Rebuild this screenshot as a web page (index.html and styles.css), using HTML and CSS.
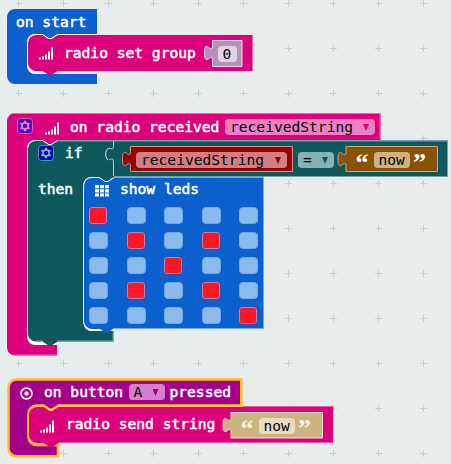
FILE: index.html
```html
<!DOCTYPE html>
<html lang="en">
<head>
<meta charset="utf-8">
<title>Blocks workspace</title>
<link rel="stylesheet" href="styles.css">
</head>
<body>
<svg class="defs" width="0" height="0" aria-hidden="true">
  <defs>
    <symbol id="signal" viewBox="0 0 14 13"><path fill="#fff" d="M0 10.500h2v2H0zM3 9.500h2v3H3zM6 7.500h2v5H6zM9 4.500h2v8H9zM12 .5h2v12h-2z"/></symbol>
    <symbol id="gear" viewBox="0 0 16 16">
      <rect x=".5" y=".5" width="15" height="15" rx="3" fill="var(--gear-bg)" stroke="var(--gear-fg)" stroke-opacity=".7"/>
      <g fill="none" stroke="var(--gear-fg)"><circle cx="8" cy="8" r="3.1" stroke-width="1.7"/><path stroke-width="2.1" d="M8 2.7v1.7M8 11.6v1.7M3.4 5.35l1.5.85M11.1 9.8l1.5.85M3.4 10.65l1.5-.85M11.1 6.2l1.5-.85"/></g>
    </symbol>
  </defs>
</svg>
<main class="workspace">
  <svg class="grid" width="451" height="464" aria-hidden="true">
    <defs><pattern id="plus" x="-4" y="-19" width="45" height="45" patternUnits="userSpaceOnUse"><path d="M19 22.5h7M22.5 19v7" stroke="#c9cece" fill="none"/></pattern></defs>
    <rect width="451" height="464" fill="url(#plus)"/>
  </svg>

  <section class="script start">
    <svg class="shape" viewBox="7 9 246 75">
      <path fill="#fff" d="M27 41a8 8 0 0 1 8-8h14v42H35a8 8 0 0 1-8-8z"/>
      <path fill="#0b60ce" d="M15 9H97V34H57.5l-6 4h-3l-6-4H35a8 8 0 0 0-8 8V66a8 8 0 0 0 8 8H97V84H15a8 8 0 0 1-8-8V17a8 8 0 0 1 8-8z"/>
      <path fill="#dc007b" d="M28 43a8 8 0 0 1 8-8h6.500l6 4h3l6-4H253V71H57.500l-6 4h-3l-6-4H36a8 8 0 0 1-8-8z"/>
      <path class="edge" d="M27.500 65V42.500a8 8 0 0 1 8-8h7l6 4h3l6-4H97"/>
      <path d="M252.500 35.500V71" stroke="#ed70b4" fill="none"/>
      <path class="value lilac" d="M212.500 40.500H242V66.500H212.500V60.500c0-10-8 8-8-7.500s8 2.500 8-7.500z"/>
    </svg>
    <div class="row r-start"><span>on start</span></div>
    <div class="row r-group"><svg class="signal"><use href="#signal"/></svg><span>radio set group</span><span class="field number">0</span></div>
  </section>

  <section class="script radio">
    <svg class="shape" viewBox="7 113 441 243">
      <path fill="#fff" d="M27 148a8 8 0 0 1 8-8h14v205H35a8 8 0 0 1-8-8z"/>
      <path fill="#dc007b" d="M15 113H380.500V140H57.500l-6 4h-3l-6-4H35a8 8 0 0 0-8 8V337a8 8 0 0 0 8 8H57V355.500H15a8 8 0 0 1-8-8V121a8 8 0 0 1 8-8z"/>
      <path d="M8 118a7 7 0 0 1 7-4.500H380V139M12 355H57" stroke="#ec62ae" fill="none"/>
      <path fill="#fff" d="M83 185a8 8 0 0 1 8-8h15v154H91a8 8 0 0 1-8-8z"/>
      <path fill="#0c585d" d="M36 140.500h6.500l6 4h3l6-4H448V177H114l-6 4h-3l-6-4H91.500a8 8 0 0 0-8 8V323a8 8 0 0 0 8 8H113.500V341.500H57.500l-6 4h-3l-6-4H36a8 8 0 0 1-8-8V148.500a8 8 0 0 1 8-8z"/>
      <path d="M57.500 141H447.500V176.500H114M36 341H43M57 341H113V331" stroke="#77a1a4" fill="none"/>
      <path class="edge" d="M27.500 337V148.500a8 8 0 0 1 8-8h7l6 4h3l6-4"/>
      <path d="M113.500 141V145.500c0 6-3 2-5.500 3M109 160c2-1 4.500-3 4.500 3V176" stroke="#b8d0d0" fill="none"/>
      <path d="M108 148.500c-3 1.500-3 10 0 11.500" stroke="#dbe8e8" fill="none"/>
      <path fill="#0b60ce" d="M92 177.500h7l6 4h3l6-4H263.500V329H113l-5 3.500h-3l-5-3.500H92a8 8 0 0 1-8-8V185.500a8 8 0 0 1 8-8z"/>
      <path d="M114 177.500H263.500V328.500H113" stroke="#70a9e5" fill="none"/>
      <path class="edge" d="M83.500 324V185.500a8 8 0 0 1 8-8h7.500l6 4h3l6-4"/>
      <path class="value red" d="M130.500 146.500H292.500V171.500H130.500V166.500c0-10-8 8-8-7.500s8 2.500 8-7.500z"/>
      <path class="value brown" d="M346 146.500H437.500V171.500H346V166.500c0-10-8 8-8-7.500s8 2.500 8-7.500z"/>
    </svg>
    <div class="row r-received"><svg class="gear"><use href="#gear"/></svg><svg class="signal"><use href="#signal"/></svg><span>on radio received</span><span class="field pink">receivedString<i class="arrow"></i></span></div>
    <div class="row r-if"><svg class="gear teal"><use href="#gear"/></svg><span>if</span><span class="field rose">receivedString<i class="arrow"></i></span><span class="field op">=<i class="arrow"></i></span><b class="quote">“</b><span class="field string">now</span><b class="quote">”</b></div>
    <div class="row r-then"><span>then</span><svg class="matrix" viewBox="0 0 14 12"><path fill="#fff" d="M0 0h4v3.200H0zM5 0h4v3.200H5zM10 0h4v3.200h-4zM0 4.200h4v3.200H0zM5 4.200h4v3.200H5zM10 4.200h4v3.200h-4zM0 8.400h4v3.200H0zM5 8.400h4v3.200H5zM10 8.400h4v3.200h-4z"/></svg><span>show leds</span></div>
    <div class="leds">
      <i class="on"></i><i></i><i></i><i></i><i></i>
      <i></i><i class="on"></i><i></i><i class="on"></i><i></i>
      <i></i><i></i><i class="on"></i><i></i><i></i>
      <i></i><i class="on"></i><i></i><i class="on"></i><i></i>
      <i></i><i></i><i></i><i></i><i class="on"></i>
    </div>
  </section>

  <section class="script button">
    <svg class="shape" viewBox="7 378 327 80">
      <path fill="#fff" d="M29 415h15v28H37a8 8 0 0 1-8-8z"/>
      <path fill="#a2008b" stroke="#ffc01f" stroke-width="2.600" d="M16.500 379.500H241.300V405.500H58.500l-6 4h-3l-6-4H36.500a8 8 0 0 0-8 8V437a8 8 0 0 0 8 8H58V456.300H16.500a8 8 0 0 1-8-8V387.500a8 8 0 0 1 8-8z"/>
      <path fill="#dc007b" d="M37 407h6.500l6 4h3l6-4H333V443H58.500l-6 4h-3l-6-4H37a8 8 0 0 1-8-8V415a8 8 0 0 1 8-8z"/>
      <path d="M243 406.500H333M59 442.500H332.500" stroke="#ea58a9" fill="none"/>
      <path class="value tan" d="M231 412.500H322.500V438H231V432.500c0-10-8 8-8-7.500s8 2.500 8-7.500z"/>
    </svg>
    <div class="row r-button"><svg class="target" viewBox="0 0 12 12"><circle cx="6" cy="6" r="5" fill="none" stroke="#fff" stroke-width="1.500"/><circle cx="6" cy="6" r="2" fill="#fff"/></svg><span>on button</span><span class="field violet">A<i class="arrow"></i></span><span>pressed</span></div>
    <div class="row r-send"><svg class="signal"><use href="#signal"/></svg><span>radio send string</span><b class="quote">“</b><span class="field pale">now</span><b class="quote">”</b></div>
  </section>
</main>
</body>
</html>
```
FILE: styles.css
```css
body { margin: 0; }
.defs { position: absolute; }
.workspace {
  position: relative;
  width: 451px;
  height: 464px;
  overflow: hidden;
  background: #e7eded;
  font: 14.6px/18px "DejaVu Sans Mono", monospace;
  color: #fff;
}
.grid { display: block; }

/* Scripts sit freely on the workspace canvas */
.script { position: absolute; left: 7px; display: flow-root; z-index: 0; }
.start { top: 9px; width: 246px; height: 75px; }
.radio { top: 113px; width: 441px; height: 243px; }
.button { top: 378px; width: 327px; height: 80px; }
.shape { position: absolute; inset: 0; width: 100%; height: 100%; z-index: -1; }

.edge { fill: none; stroke: #fff; stroke-opacity: .85; }
.value { stroke-width: 1; }
.lilac { fill: #b891bb; stroke: #e8dcea; }
.red { fill: #990000; stroke: #cf9693; }
.brown { fill: #8a5200; stroke: #c9ad7e; }
.tan { fill: #ccb380; stroke: #eee3ce; }

.row { display: grid; height: 18px; align-items: start; white-space: pre; }
.row > span:not(.field) { -webkit-text-stroke: .55px #fff; }
.r-start { margin: 4px 0 0 9px; }
.r-group { margin: 13px 0 0 32px; grid-template-columns: 25px 153.500px 19px; }
.r-received { margin: 5px 0 0 10px; grid-template-columns: 28px 25px 155px 150px; }
.r-if { margin: 8px 0 0 31px; grid-template-columns: 27px 71px 162px 57.500px 18px 39.500px 18px; }
.r-then { margin: 18px 0 0 31px; grid-template-columns: 57px 25px auto; }
.r-button { margin: 5px 0 0 13px; grid-template-columns: 24px 84.500px 41px auto; }
.r-send { margin: 14px 0 0 33px; grid-template-columns: 26px 174.500px 18px 39.500px 18px; }

.signal { width: 14px; height: 13px; margin-top: 5px; }
.r-group .signal { margin-top: 3px; }
.r-received .signal { margin-top: 4px; }
.gear { width: 16px; height: 16px; --gear-bg: #4a00c8; --gear-fg: #ee82c4; }
.gear.teal { --gear-bg: #0008b5; --gear-fg: #87b2ba; margin-top: 1px; }
.target { width: 13px; height: 13px; margin-top: 4px; }
.matrix { width: 14px; height: 12px; margin-top: 5px; }

.field {
  box-sizing: border-box;
  display: flex;
  justify-content: space-between;
  height: 16px;
  margin-top: 1px;
  padding: 0 6px 0 5px;
  border-radius: 4px;
  line-height: 16px;
  color: #000;
}
.arrow { width: 6px; height: 7px; margin-top: 5px; background: var(--arrow); clip-path: polygon(0 0, 100% 0, 50% 100%); }
.number { width: 19px; margin-top: 2px; background: #e2d3e4; }
.pink { background: #ef7fc3; --arrow: #dc007b; }
.rose { width: 151px; background: #d17f80; --arrow: #990000; }
.op { width: 36px; background: #85b2b5; --arrow: #0c585d; }
.violet { width: 36px; background: #d67fce; --arrow: #a2008b; }
.string, .pale { width: 36.500px; background: #ccb285; }
.pale { background: #e8dcc5; margin-top: 3px; }
.r-if .field { margin-top: 8px; }
.quote { font: bold 26px/29px "Liberation Serif", serif; height: 18px; margin-top: 4px; }
.r-send .quote { margin-top: -1px; opacity: .85; }

.leds {
  display: grid;
  grid-template-columns: repeat(5, 19px);
  grid-auto-rows: 16.500px;
  gap: 8.500px 18.600px;
  margin: 9px 0 0 82px;
}
.leds i { box-sizing: border-box; border-radius: 4px; background: #8abbec; border: 1px solid #6faae6; }
.leds .on { width: 18px; background: #ff1624; border: 1.500px solid #bb82ad; border-radius: 3px; box-shadow: 0 1px 2px #51409b; }
```
